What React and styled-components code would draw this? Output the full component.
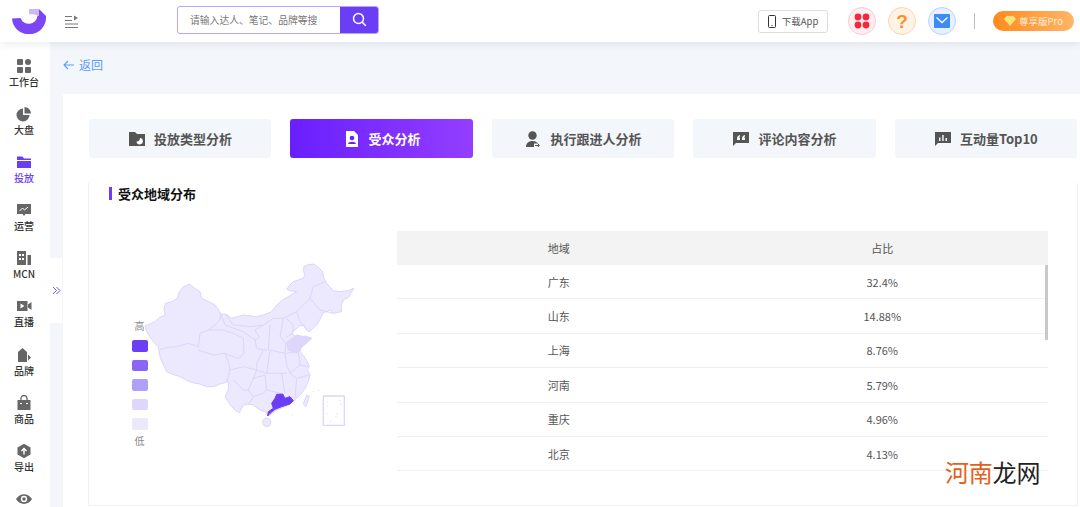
import React from "react";
import styled, { createGlobalStyle } from "styled-components";

const GlobalStyle = createGlobalStyle`
  html, body {
    margin: 0;
    padding: 0;
    background: #f3f6fa;
    font-family: "Noto Sans CJK SC", "Noto Sans", sans-serif;
  }
  * {
    box-sizing: border-box;
  }
`;

/* styled-components */
const Page = styled.div`
  position: relative;
  width: 1080px;
  height: 507px;
  overflow: hidden;
  display: flex;
  flex-direction: column;
  background: #f3f6fa;
`;

const Header = styled.header`
  position: relative;
  z-index: 2;
  flex: 0 0 42px;
  display: flex;
  align-items: center;
  background: #fff;
  box-shadow: 0 2px 8px rgba(60, 70, 90, 0.1);
`;

const LogoWrap = styled.div`
  flex: 0 0 65px;
  padding-left: 12px;
  display: flex;
  align-items: center;
`;

const MenuToggle = styled.div`
  flex: 0 0 112px;
  display: flex;
  align-items: center;
`;

const SearchBox = styled.div`
  flex: 0 0 202px;
  height: 28px;
  display: flex;
  border: 1px solid #b9a6fb;
  border-radius: 3px;
  overflow: hidden;
  margin-top: -3px;
`;

const SearchText = styled.div`
  flex: 1;
  padding-left: 12px;
  font-size: 9.8px;
  line-height: 26px;
  color: #777;
`;

const SearchButton = styled.div`
  flex: 0 0 38px;
  display: flex;
  align-items: center;
  justify-content: center;
  background: #6a3ef5;
`;

const HeaderRight = styled.div`
  margin-left: 379px;
  display: flex;
  align-items: center;
`;

const DownloadButton = styled.div`
  flex: 0 0 70px;
  height: 23px;
  display: flex;
  align-items: center;
  justify-content: center;
  gap: 6px;
  margin-right: 20px;
  border: 1px solid #ddd;
  border-radius: 3px;
  font-size: 9.5px;
  color: #555;
`;

const RoundIcon = styled.div`
  flex: 0 0 28px;
  height: 28px;
  margin-right: 12px;
  display: flex;
  align-items: center;
  justify-content: center;
  border-radius: 50%;
  background: ${(p) => p.$bg};
  border: 1px solid ${(p) => p.$line};
`;

const Question = styled.span`
  font-family: "Liberation Sans", sans-serif;
  font-size: 19px;
  font-weight: 700;
  line-height: 1;
  color: #f7931e;
`;

const Divider = styled.div`
  flex: 0 0 1px;
  height: 16px;
  margin: 0 18px 0 6px;
  background: #bbb;
`;

const ProBadge = styled.div`
  flex: 0 0 81px;
  height: 20px;
  display: flex;
  align-items: center;
  justify-content: center;
  gap: 3px;
  border-radius: 10px;
  background: linear-gradient(90deg, #ff8a1e, #ffb567);
  font-size: 9.5px;
  color: #ffeeda;
`;

const Body = styled.div`
  flex: 1;
  display: flex;
  min-height: 0;
`;

const Sidebar = styled.nav`
  flex: 0 0 50px;
  padding: 16px 2px 0 0;
  display: flex;
  flex-direction: column;
  align-items: center;
  background: #fff;
`;

const NavItem = styled.div`
  flex: 0 0 48.1px;
  display: flex;
  flex-direction: column;
  align-items: center;
  gap: 1px;
  font-size: 10px;
  font-weight: 500;
  line-height: 14px;
  color: ${(p) => (p.$active ? "#6a3ef5" : "#333")};
`;

const ExpandHandle = styled.div`
  position: absolute;
  left: 50px;
  top: 258px;
  width: 12px;
  height: 65px;
  display: flex;
  align-items: center;
  justify-content: center;
  background: #fff;
`;

const Main = styled.main`
  flex: 1;
  min-width: 0;
  padding: 14px 0 0 13px;
`;

const BackLink = styled.div`
  height: 38px;
  display: flex;
  align-items: flex-start;
  gap: 5px;
  font-size: 12px;
  line-height: 18px;
  color: #5b9cf5;
`;

const Card = styled.section`
  width: 1040px;
  height: 430px;
  padding: 25px 0 0 26px;
  background: #fff;
`;

const Tabs = styled.div`
  display: flex;
  gap: 19.25px;
`;

const Tab = styled.div`
  flex: 0 0 182.2px;
  height: 39px;
  padding-left: 1px;
  display: flex;
  align-items: center;
  justify-content: center;
  gap: 9px;
  border-radius: 3px;
  font-size: 13px;
  font-weight: 700;
  color: ${(p) => (p.$active ? "#fff" : "#555")};
  background: ${(p) => (p.$active ? "linear-gradient(90deg, #691ffe, #933eff)" : "#f3f6fa")};
`;

const Panel = styled.div`
  width: 990px;
  height: 323px;
  margin: 25px 0 0 -1px;
  padding: 3px 0 0 20px;
  border: 1px solid #f1f1f1;
  border-top: none;
`;

const PanelTitle = styled.h3`
  margin: 0;
  height: 14px;
  display: flex;
  align-items: center;
  gap: 6px;
  font-size: 13px;
  font-weight: 700;
  color: #111;

  &::before {
    content: "";
    width: 3px;
    height: 13px;
    background: #6a3ef5;
  }
`;

const PanelBody = styled.div`
  display: flex;
  margin: 31px 0 0 -9px;
`;

const MapPane = styled.div`
  position: relative;
  flex: 0 0 270px;
  height: 210px;
  margin: 19px 27px 0 0;
`;

const Legend = styled.div`
  position: absolute;
  left: 31px;
  top: 69px;
  width: 17px;
  display: flex;
  flex-direction: column;
  align-items: center;
  gap: 8px;
  font-size: 10px;
  line-height: 13px;
  color: #888;
`;

const LegendLow = styled.span`
  margin-top: -4px;
`;

const LegendSwatch = styled.div`
  width: 16px;
  height: 11.5px;
  border-radius: 2px;
  background: ${(p) => p.$color};
`;

const Table = styled.div`
  position: relative;
  flex: 0 0 651px;
`;

const TableRow = styled.div`
  display: grid;
  grid-template-columns: 1fr 1fr;
  padding-right: 4px;
  height: ${(p) => (p.$head ? "34px" : "34.4px")};
  align-items: center;
  text-align: center;
  font-size: 11px;
  color: #555;
  background: ${(p) => (p.$head ? "#f3f3f3" : "#fff")};
  border-bottom: ${(p) => (p.$head ? "none" : "1px solid #f0f0f0")};
`;

const ScrollThumb = styled.div`
  position: absolute;
  right: 0;
  top: 34px;
  width: 3px;
  height: 75px;
  background: #c9c9c9;
`;

const Watermark = styled.div`
  position: absolute;
  left: 945px;
  top: 455px;
  font-size: 24px;
  line-height: 34px;
  letter-spacing: -0.2px;
  color: #222;
`;

const WatermarkAccent = styled.span`
  color: #e2621b;
`;

/* drawings */
const Logo = () => (
  <svg width="35" height="25" viewBox="0 0 35 25">
    <path d="M0 9.500L8.500 9A8.800 8.800 0 0 0 25.500 7H34V8A17 16.500 0 0 1 0 9.500Z" fill="#7c46f4" />
    <path d="M27 0L34 7H27Z" fill="#7c46f4" />
    <path d="M17 0H27V7H25.500C24 5.500 21 5 17 5.500Z" fill="#cdb8fb" />
  </svg>
);

const MenuIcon = () => (
  <svg width="14" height="13" viewBox="0 0 14 13" fill="none" stroke="#777" strokeWidth="1">
    <path d="M0 1.500h7M0 5.500h7M0 9h13M0 12.500h13" />
    <path d="M9 .5l4 2.500-4 2.500z" fill="#777" stroke="none" />
  </svg>
);

const SearchIcon = () => (
  <svg width="15" height="15" viewBox="0 0 15 15" fill="none" stroke="#fff" strokeWidth="1.500">
    <circle cx="6.500" cy="6.500" r="5" />
    <path d="M10.300 10.300l3.500 3.500" />
  </svg>
);

const PhoneIcon = () => (
  <svg width="8" height="13" viewBox="0 0 8 13" fill="none" stroke="#333" strokeWidth="1">
    <rect x=".5" y=".5" width="7" height="12" rx="1" />
    <path d="M3.500 10.500h1" />
  </svg>
);

const DotsIcon = () => (
  <svg width="16" height="16" viewBox="0 0 16 16" fill="#f5263f">
    <circle cx="4" cy="4" r="3.400" />
    <circle cx="12" cy="4" r="3.400" />
    <circle cx="4" cy="12" r="3.400" />
    <circle cx="12" cy="12" r="3.400" />
  </svg>
);

const MailIcon = () => (
  <svg width="16" height="14" viewBox="0 0 16 14">
    <rect width="16" height="14" rx="1" fill="#3d8bf7" />
    <path d="M2.500 3.500L8 8.500l5.500-5" fill="none" stroke="#fff" strokeWidth="1.300" />
  </svg>
);

const GemIcon = () => (
  <svg width="12" height="10" viewBox="0 0 12 10">
    <path d="M2.500 0h7L12 3 6 10 0 3z" fill="#ffe27a" />
  </svg>
);

const navIcons = {
  grid: (
    <>
      <rect x="1" y="1" width="6" height="6" rx="1" />
      <rect x="9" y="1" width="6" height="6" rx="3" />
      <rect x="1" y="9" width="6" height="6" rx="1" />
      <rect x="9" y="9" width="6" height="6" rx="1" />
    </>
  ),
  pie: (
    <>
      <path d="M7 2.500a6.500 6.500 0 1 0 6.500 6.500H7z" />
      <path d="M8.500 1a6.500 6.500 0 0 1 6.500 6.500H8.500z" />
    </>
  ),
  folder: (
    <>
      <path d="M1 2.500h5.500l1.500 2h7V6H1z" />
      <path d="M1 7h14v7H1z" />
    </>
  ),
  chart: (
    <>
      <path d="M1 2h14v10H9.500l-1.500 2-1.500-2H1z" />
      <path d="M3.500 9l3-3 2 2 3.500-3" fill="none" stroke="#fff" strokeWidth="1" />
    </>
  ),
  building: (
    <>
      <path d="M1 1h9v14H1z" />
      <path d="M11.500 5H15v10h-3.500z" />
      <path d="M3 4h2v2H3zM6 4h2v2H6zM3 8h2v2H3zM6 8h2v2H6z" fill="#fff" />
    </>
  ),
  video: (
    <>
      <path d="M1 3h10.500v10H1z" />
      <path d="M12 6.500L15.500 4v8L12 9.500z" />
      <path d="M4.500 5.500L8.500 8l-4 2.500z" fill="#fff" />
    </>
  ),
  tag: (
    <>
      <path d="M6.500 1L11 5v10H2V5z" />
      <path d="M12 7.500l3 3-3 3z" />
    </>
  ),
  bag: (
    <>
      <path d="M1.500 5h13v10h-13z" />
      <path d="M5 6V3.500a3 3 0 0 1 6 0V6" fill="none" stroke="#666" strokeWidth="1.300" />
      <path d="M4 8.500h2M10 8.500h2" stroke="#fff" strokeWidth="1" />
    </>
  ),
  upload: (
    <>
      <path d="M8 .8l6.500 3.700v7L8 15.200 1.500 11.500v-7z" />
      <path d="M8 11.500V6M5.500 8L8 5.500 10.500 8" fill="none" stroke="#fff" strokeWidth="1.400" />
    </>
  ),
  eye: (
    <>
      <path d="M0 8c4-6.500 12-6.500 16 0-4 6.500-12 6.500-16 0z" />
      <circle cx="8" cy="8" r="3.200" fill="#fff" />
      <circle cx="8" cy="8" r="1.700" />
    </>
  ),
};

const NavIcon = ({ name, color }) => (
  <svg width="16" height="16" viewBox="0 0 16 16" fill={color}>
    {navIcons[name]}
  </svg>
);

const tabIcons = {
  folder: (
    <>
      <path d="M0 1h6l2 2h8v12H0z" />
      <path d="M11 7a3.200 3.200 0 1 1-3.500 3.500c1.800.5 3.500-1 3.500-3.500z" fill="#fff" />
    </>
  ),
  person: (
    <>
      <path d="M2 0h8l4 4v12H2z" />
      <circle cx="8" cy="7" r="2.300" fill="#691ffe" />
      <path d="M4 13c.5-3 7.500-3 8 0z" fill="#691ffe" />
    </>
  ),
  assign: (
    <>
      <circle cx="7.500" cy="4.500" r="4.200" />
      <path d="M1 16c0-4 3-6 6.500-6s5 1.500 5 2.500H9V16z" />
      <path d="M10 14.500h4M12.500 12.500l2 2-2 1.500" fill="none" stroke="currentColor" strokeWidth="1" />
    </>
  ),
  quote: (
    <>
      <path d="M0 1h16v11H3l-3 3z" />
      <path d="M4 7.800C4 5.500 5 4.500 7 4v1.500c-.6.200-1 .5-1 1h1v2.500H4zM9 7.800C9 5.500 10 4.500 12 4v1.500c-.6.200-1 .5-1 1h1v2.500H9z" fill="#f3f6fa" />
    </>
  ),
  bars: (
    <>
      <path d="M0 1h16v11H3l-3 3z" />
      <path d="M4 6.500h1.500V10H4zM7.200 4h1.500v6H7.200zM10.500 7h1.500v3h-1.500z" fill="#f3f6fa" />
    </>
  ),
};

const TabIcon = ({ name, active }) => (
  <svg
    width="16"
    height="16"
    viewBox="0 0 16 16"
    fill={active ? "#fff" : "#555"}
    color="#555"
  >
    {tabIcons[name]}
  </svg>
);

/* map drawn in 3x coordinates of its box */
const outline =
  "M135 228L150 222L165 215L178 203L195 195L192 175L197 160L215 155L232 145L238 125L250 110L268 103L285 115L300 125L305 145L320 152L345 165L355 178L362 192L378 193L395 205L430 195L470 200L490 195L515 185L530 165L548 150L565 140L578 132L590 125L570 122L560 118L570 105L580 95L595 90L608 85L615 75L610 62L612 50L625 44L642 42L655 52L668 65L672 85L680 100L700 122L720 125L745 122L762 114L752 130L745 142L730 150L724 165L724 185L700 190L690 180L668 190L662 205L650 225L628 245L620 240L612 225L598 228L585 240L575 250L585 258L600 262L615 258L635 265L620 278L605 290L600 305L612 320L622 335L628 350L622 358L630 375L625 395L615 415L605 430L590 445L578 455L565 465L530 480L505 498L495 485L480 480L460 465L445 462L430 465L418 488L405 480L395 470L385 455L375 440L385 420L385 395L360 402L340 410L320 410L300 402L285 400L262 392L240 380L215 372L200 365L188 340L180 320L175 290L160 275L150 260L140 245Z";

const borders = [
  "M180 298L205 292L230 290L265 280L295 290",
  "M295 290L300 250L325 240L345 225L360 210L362 190",
  "M325 240L370 240L400 250L430 265L432 310L415 325L385 315L375 310L340 315L295 300",
  "M375 310L385 335L390 360L380 395",
  "M390 360L430 350L470 360L460 385L445 420L430 420L400 390",
  "M362 190L375 225L430 245L465 270L470 295L490 300L470 340L470 360",
  "M378 195L400 225L450 230L490 225L520 205L550 205L590 185L630 145L640 110L675 95",
  "M630 145L660 180L700 190",
  "M590 185L600 215L625 245",
  "M510 225L505 300L490 300",
  "M465 240L490 225M465 240L478 262L465 270",
  "M550 205L540 260L558 280L555 310L510 300",
  "M558 205L580 225L578 250L558 262",
  "M555 310L595 305L600 345L570 370L560 345L555 310",
  "M470 360L500 370L560 370M510 300L500 370",
  "M445 420L460 440L445 465M460 385L495 375L500 420L490 430L460 440",
  "M500 420L540 430M545 370L555 430M570 370L590 385L585 445",
  "M600 345L628 350M590 385L628 375",
];

const ChinaMap = () => (
  <svg width="270" height="210" viewBox="0 0 810 630" fill="none" stroke="#dcd5fc" strokeWidth="3" strokeLinejoin="round">
    <path d={outline} fill="#ece8fd" />
    {borders.map((d) => (
      <path key={d} d={d} />
    ))}
    <path d="M560 278L590 255L635 265L605 292L590 310L565 300Z" fill="#ded6fb" />
    <path d="M503 498L505 485L520 475L515 460L525 445L530 433L548 432L555 445L570 440L580 452L570 462L545 470L525 478L510 490Z" fill="#6a3ef5" stroke="#6a3ef5" />
    <ellipse cx="500" cy="517" rx="12" ry="13" fill="#ece8fd" />
    <path d="M620 435L628 440L618 470L610 462Z" fill="#ece8fd" />
    <rect x="670" y="438" width="63" height="88" strokeWidth="4" />
    <path d="M680 455l2 12M720 450l3 14M680 490l3 10M712 490l-6 18M690 515l8 2" strokeWidth="3" strokeDasharray="4 6" />
    <path d="M640 425h3M655 422h3M576 495h3" strokeWidth="3" />
  </svg>
);

const navItems = [
  ["grid", "工作台"],
  ["pie", "大盘"],
  ["folder", "投放", true],
  ["chart", "运营"],
  ["building", "MCN"],
  ["video", "直播"],
  ["tag", "品牌"],
  ["bag", "商品"],
  ["upload", "导出"],
  ["eye", ""],
];

const tabs = [
  ["folder", "投放类型分析"],
  ["person", "受众分析", true],
  ["assign", "执行跟进人分析"],
  ["quote", "评论内容分析"],
  ["bars", "互动量Top10"],
];

const regions = [
  ["广东", "32.4%"],
  ["山东", "14.88%"],
  ["上海", "8.76%"],
  ["河南", "5.79%"],
  ["重庆", "4.96%"],
  ["北京", "4.13%"],
];

const legendColors = ["#6a3ef5", "#8a66f7", "#b0a0f9", "#ded6fb", "#ece8fd"];

export default function App() {
  return (
    <Page>
      <GlobalStyle />
      <Header>
        <LogoWrap>
          <Logo />
        </LogoWrap>
        <MenuToggle>
          <MenuIcon />
        </MenuToggle>
        <SearchBox>
          <SearchText>请输入达人、笔记、品牌等搜</SearchText>
          <SearchButton>
            <SearchIcon />
          </SearchButton>
        </SearchBox>
        <HeaderRight>
          <DownloadButton>
            <PhoneIcon />
            下载App
          </DownloadButton>
          <RoundIcon $bg="#ffeef0" $line="#fbc9ce">
            <DotsIcon />
          </RoundIcon>
          <RoundIcon $bg="#fff2e6" $line="#fcd5a8">
            <Question>?</Question>
          </RoundIcon>
          <RoundIcon $bg="#e6f0ff" $line="#b9d4fb">
            <MailIcon />
          </RoundIcon>
          <Divider />
          <ProBadge>
            <GemIcon />
            尊享版Pro
          </ProBadge>
        </HeaderRight>
      </Header>
      <Body>
        <Sidebar>
          {navItems.map(([icon, label, active]) => (
            <NavItem key={icon} $active={active}>
              <NavIcon name={icon} color={active ? "#6a3ef5" : "#666"} />
              {label}
            </NavItem>
          ))}
        </Sidebar>
        <Main>
          <BackLink>
            <svg width="11" height="18" viewBox="0 0 11 18" fill="none" stroke="#5b9cf5" strokeWidth="1.100">
              <path d="M11 9H1M5 5L1 9l4 4" />
            </svg>
            返回
          </BackLink>
          <Card>
            <Tabs>
              {tabs.map(([icon, label, active]) => (
                <Tab key={label} $active={active}>
                  <TabIcon name={icon} active={active} />
                  {label}
                </Tab>
              ))}
            </Tabs>
            <Panel>
              <PanelTitle>受众地域分布</PanelTitle>
              <PanelBody>
                <MapPane>
                  <ChinaMap />
                  <Legend>
                    高
                    {legendColors.map((c) => (
                      <LegendSwatch key={c} $color={c} />
                    ))}
                    <LegendLow>低</LegendLow>
                  </Legend>
                </MapPane>
                <Table>
                  <TableRow $head>
                    <span>地域</span>
                    <span>占比</span>
                  </TableRow>
                  {regions.map(([name, share]) => (
                    <TableRow key={name}>
                      <span>{name}</span>
                      <span>{share}</span>
                    </TableRow>
                  ))}
                  <ScrollThumb />
                </Table>
              </PanelBody>
            </Panel>
          </Card>
        </Main>
      </Body>
      <ExpandHandle>
        <svg width="9" height="9" viewBox="0 0 9 9" fill="none" stroke="#7a55f6" strokeWidth="1">
          <path d="M1 1l3.500 3.500L1 8M4.500 1L8 4.500 4.500 8" />
        </svg>
      </ExpandHandle>
      <Watermark>
        <WatermarkAccent>河南</WatermarkAccent>龙网
      </Watermark>
    </Page>
  );
}
